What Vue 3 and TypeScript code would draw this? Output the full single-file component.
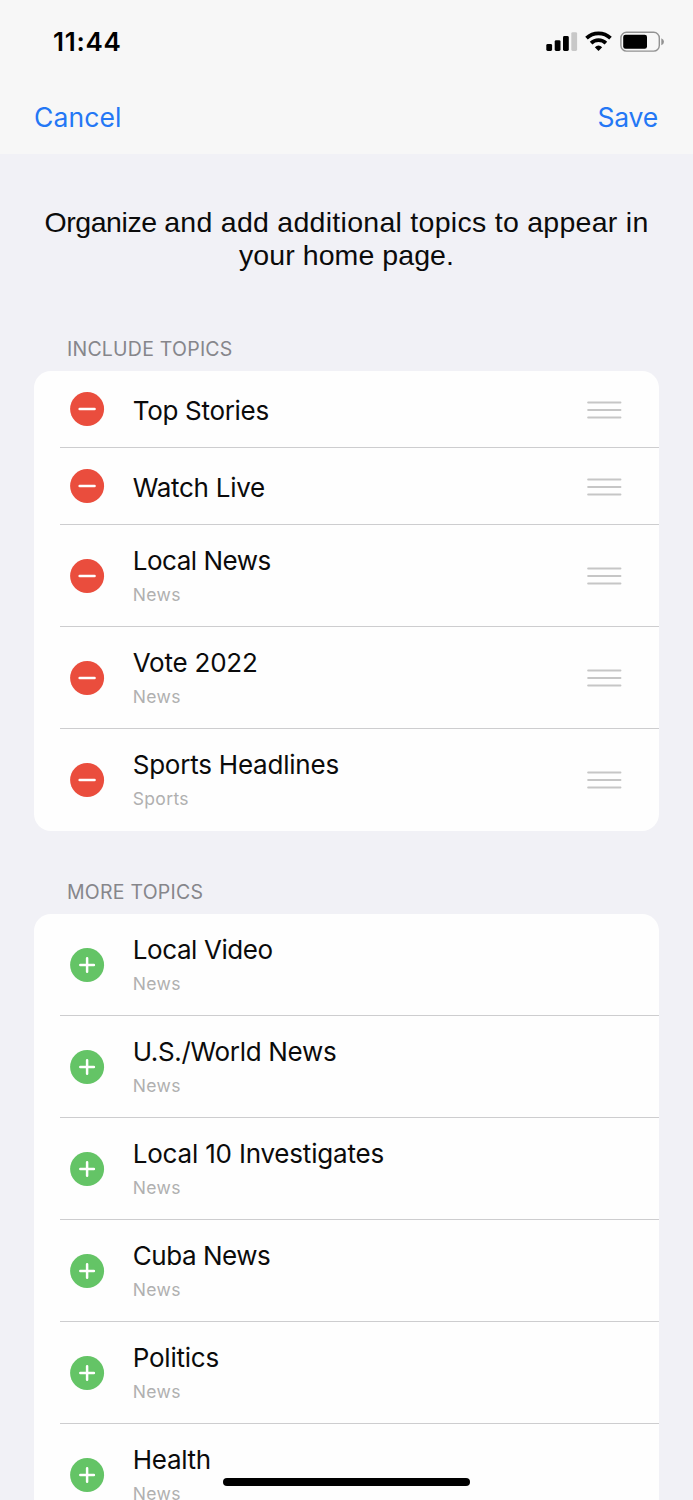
<script setup lang="ts">
interface Topic {
  title: string
  category?: string
  tracking: number
}

const included: Topic[] = [
  { title: 'Top Stories', tracking: -0.3 },
  { title: 'Watch Live', tracking: -0.27 },
  { title: 'Local News', category: 'News', tracking: -0.48 },
  { title: 'Vote 2022', category: 'News', tracking: -0.22 },
  { title: 'Sports Headlines', category: 'Sports', tracking: -0.22 },
]

const more: Topic[] = [
  { title: 'Local Video', category: 'News', tracking: -0.4 },
  { title: 'U.S./World News', category: 'News', tracking: -0.32 },
  { title: 'Local 10 Investigates', category: 'News', tracking: -0.19 },
  { title: 'Cuba News', category: 'News', tracking: -0.45 },
  { title: 'Politics', category: 'News', tracking: -0.22 },
  { title: 'Health', category: 'News', tracking: -0.27 },
]

const spacing = (t: Topic) => ({ letterSpacing: `${t.tracking}px` })
</script>

<template>
  <div class="screen">
    <header class="top">
      <div class="status">
        <span class="time">11:44</span>
        <svg class="indicators" width="120" height="24" viewBox="0 0 120 24">
          <rect x="0.3" y="14" width="5.8" height="7" rx="1.4" />
          <rect x="8.7" y="10.2" width="5.8" height="10.8" rx="1.4" />
          <rect x="17" y="6" width="5.8" height="15" rx="1.4" />
          <rect x="25.3" y="2.2" width="5.8" height="18.8" rx="1.4" fill="#c8c8c8" />
          <g fill="none" stroke="#000" stroke-width="3.7">
            <path d="M40.5 8.1A17.4 17.4 0 0 1 64.5 8.1" />
            <path d="M45.1 13.1A10.6 10.6 0 0 1 59.9 13.1" />
          </g>
          <path d="M48.8 17.2Q52.5 13.8 56.2 17.2L52.5 21Z" />
          <rect x="74.9" y="2.3" width="38.4" height="18.8" rx="5.6" fill="none" stroke="#929292" stroke-width="1.4" />
          <rect x="77.2" y="4.7" width="23.8" height="14" rx="2.3" />
          <path d="M115.3 8.3Q118 9.4 118 11.7T115.3 15.2Z" fill="#929292" />
        </svg>
      </div>
      <nav class="actions">
        <span class="cancel">Cancel</span>
        <span class="save">Save</span>
      </nav>
    </header>

    <p class="intro">
      <span class="lead">Organize </span><span class="rest">and add additional topics to appear in</span><br />
      <span>your home page.</span>
    </p>

    <h2 class="heading">INCLUDE TOPICS</h2>
    <ul class="card">
      <li v-for="t in included" :key="t.title" class="row" :class="{ short: !t.category }">
        <svg class="badge" width="35" height="34" viewBox="0 0 35 34">
          <circle cx="17.1" cy="17" r="17" fill="#ea4d3d" />
          <path d="M9.7 17H24.5" stroke="#fff" stroke-width="2.6" stroke-linecap="round" />
        </svg>
        <div class="label">
          <span class="title" :style="spacing(t)">{{ t.title }}</span>
          <span v-if="t.category" class="category">{{ t.category }}</span>
        </div>
        <svg class="grip" width="35" height="20" viewBox="0 0 35 20">
          <path d="M1.2 2.5H33.4M1.2 10H33.4M1.2 17.5H33.4" stroke="#c6c6c6" stroke-width="2.1" stroke-linecap="round" />
        </svg>
      </li>
    </ul>

    <h2 class="heading more">MORE TOPICS</h2>
    <ul class="card">
      <li v-for="t in more" :key="t.title" class="row">
        <svg class="badge" width="35" height="34" viewBox="0 0 35 34">
          <circle cx="17.1" cy="17" r="17" fill="#64c466" />
          <path d="M10.3 17H23.9M17.1 10.2V23.8" stroke="#fff" stroke-width="2.5" stroke-linecap="round" />
        </svg>
        <div class="label">
          <span class="title" :style="spacing(t)">{{ t.title }}</span>
          <span class="category">{{ t.category }}</span>
        </div>
      </li>
    </ul>
    <div class="home-bar"></div>
  </div>
</template>

<style>
body {
  margin: 0;
  background: #f1f1f6;
}
</style>

<style scoped>
.screen {
  position: relative;
  width: 693px;
  height: 1500px;
  overflow: hidden;
  background: #f1f1f6;
  font-family: Inter, 'Liberation Sans', sans-serif;
  color: #0b0b0b;
}
.top {
  box-sizing: border-box;
  height: 154px;
  background: #f7f7f7;
}
.status {
  box-sizing: border-box;
  height: 84px;
  padding: 26px 27px 0 53px;
  display: flex;
  justify-content: space-between;
}
.time {
  font-size: 26px;
  font-weight: 600;
  line-height: 32px;
  letter-spacing: 0.7px;
  color: #000;
}
.indicators {
  margin-top: 4px;
}
.actions {
  display: flex;
  justify-content: space-between;
  padding: 16px 35px 0 34px;
  font-size: 26.5px;
  line-height: 34px;
  color: #2477f5;
}
.cancel {
  letter-spacing: 0.1px;
}
.save {
  letter-spacing: -0.2px;
}
.intro {
  margin: 51.5px 0 0;
  font-family: 'Liberation Sans', Arial, sans-serif;
  font-size: 28.5px;
  line-height: 33px;
  letter-spacing: 0.07px;
  text-align: center;
  white-space: nowrap;
}
.lead {
  letter-spacing: -0.42px;
}
.rest {
  letter-spacing: 0.28px;
}
.heading {
  height: 24px;
  margin: 65.5px 0 10px 67px;
  font-size: 19.5px;
  font-weight: 400;
  line-height: 24px;
  letter-spacing: 0.23px;
  color: #86868b;
}
.heading.more {
  margin-top: 49px;
}
.card {
  list-style: none;
  margin: 0 34px;
  padding: 0;
  border-radius: 17px;
  background: #fefefe;
}
.row {
  position: relative;
  box-sizing: border-box;
  height: 102px;
  display: flex;
  align-items: center;
  padding: 0 37px 0 35.5px;
}
.row.short {
  height: 77px;
}
.row:not(:last-child)::after {
  content: '';
  position: absolute;
  left: 26px;
  right: 0;
  bottom: 0;
  height: 1px;
  background: #cdcdcf;
}
.badge {
  flex: none;
  margin-bottom: 0.6px;
}
.label {
  flex: 1;
  margin-left: 28.2px;
  display: flex;
  flex-direction: column;
  padding-bottom: 1px;
}
.short .label {
  padding: 3px 0 0;
}
.title {
  font-size: 26px;
  line-height: 36px;
  white-space: nowrap;
}
.category {
  margin-top: 2px;
  font-size: 17.5px;
  line-height: 28px;
  letter-spacing: 0.35px;
  color: #b0b0b0;
}
.home-bar {
  position: absolute;
  left: 223px;
  top: 1478px;
  width: 247px;
  height: 8px;
  border-radius: 4px;
  background: #000;
}
</style>
